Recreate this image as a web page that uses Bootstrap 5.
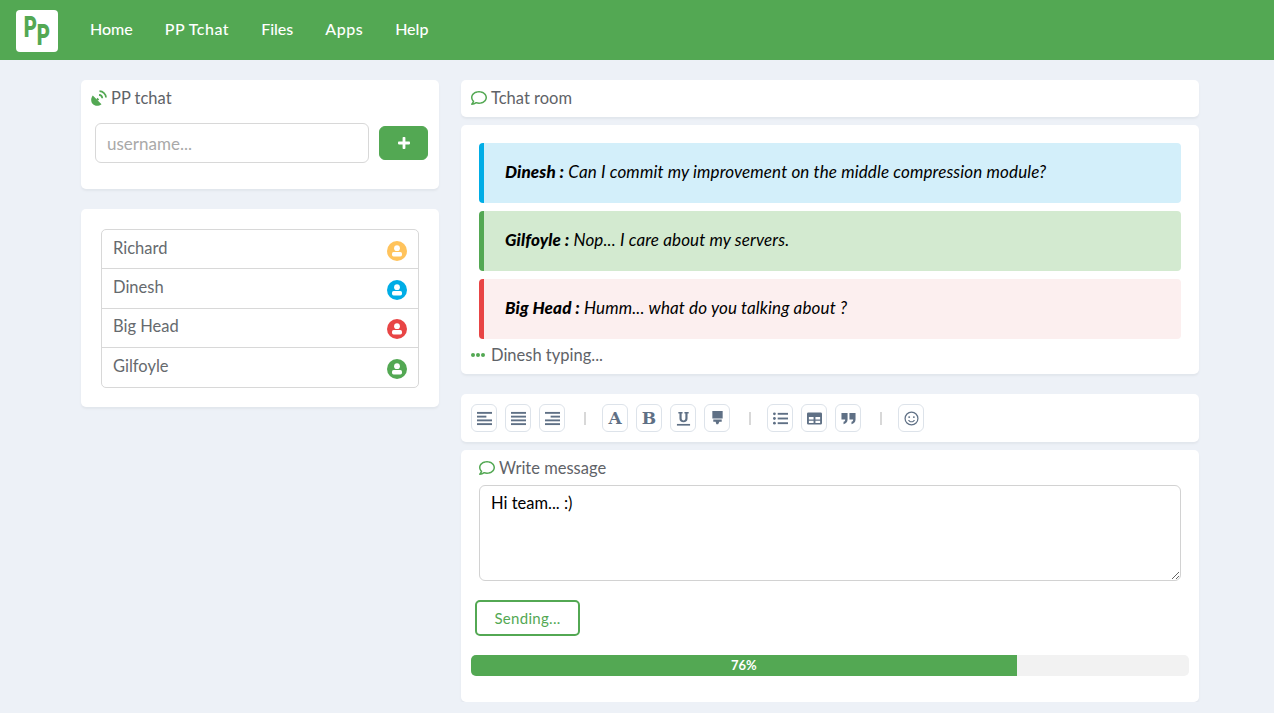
<!DOCTYPE html>
<html lang="en">
<head>
  <meta charset="UTF-8">
  <title>PP Tchat</title>
  <link href="https://cdn.jsdelivr.net/npm/bootstrap@5.3.0/dist/css/bootstrap.min.css" rel="stylesheet">
  <style>
    body { background: #edf1f7; font-family: "Lato", "Noto Sans", sans-serif; font-size: 16.5px; color: #5f6368; }
    .pp-nav { height: 60px; background: #53a853; padding: 0 16px; }
    .pp-logo { width: 42px; height: 42px; margin: 2px 16px 0 0; background: #fff; border-radius: 4px; color: #53a853; font-weight: 900; font-size: 29px; line-height: 1; font-family: "Roboto", sans-serif; }
    .pp-logo span { display: inline-block; transform: scaleX(.7); }
    .pp-logo span:first-child { margin: -7px -3px 0 0; }
    .pp-logo span:last-child { margin: 9px 0 0 -2.4px; }
    .pp-nav .nav-link { color: #fff; font-size: 16px; font-weight: 500; padding: 0 16px 2px; }
    .pp-nav .pp-wide { letter-spacing: .5px; }
    .pp-page { padding: 20px 75px 0 81px; gap: 22px; }
    .pp-left { width: 358px; flex: none; }
    .pp-right { width: 738px; flex: none; }
    .pp-box { background: #fff; border: 0; border-radius: 5px; box-shadow: 0 2px 2px #e2e6ec; }
    .pp-title { font-size: 16.5px; line-height: 20px; color: #5f6368; }
    .pp-ico { fill: #53a853; width: 16px; height: 16px; flex: none; }
    .pp-user-input { height: 40px; width: 274px; flex: none; font-size: 17px; padding: 0 11px; border-color: #d8d8d8; }
    .pp-user-input::placeholder { color: #a9a9a9; }
    .pp-add { width: 49px; height: 34px; background: #53a853; border-color: #53a853; padding: 0; }
    .pp-users { border: 1px solid #d8d8d8; border-radius: 5px; }
    .pp-user { height: 39.25px; padding: 0 11px 2px; font-size: 16.5px; color: #666a6e; border-bottom: 1px solid #d8d8d8; }
    .pp-user:last-child { border-bottom: 0; }
    .pp-user svg { width: 20px; height: 20px; margin-top: 5px; }
    .pp-msg { height: 60px; padding: 0 0 2px 21px; margin-bottom: 8px; border-left: 5px solid; border-radius: 4px; color: #000; font-style: italic; font-size: 17px; letter-spacing: .13px; }
    .pp-msg b { font-weight: 900; }
    .pp-info { background: #d3effa; border-color: #00ade6; }
    .pp-ok { background: #d3ead0; border-color: #53a853; }
    .pp-bad { background: #fcefef; border-color: #e84545; }
    .pp-tool { width: 26px; height: 28px; border: 1px solid #dde3ea; border-radius: 6px; color: #5f7085; font-family: "DejaVu Serif", serif; font-weight: 700; font-size: 17px; line-height: 1; }
    .pp-tool svg { width: 15px; height: 15px; fill: #5f7085; }
    .pp-sep { width: 2px; height: 13px; background: #d8d8d8; margin: 0 8px 0 11px; }
    .pp-area { height: 96px; font-size: 16.5px; color: #000; padding: 5px 11px; border-color: #d2d2d2; margin-left: 18px; width: 702px; }
    .pp-send { width: 105px; height: 36px; margin: 19px 0 0 14px; padding: 0; border: 2px solid #53a853; border-radius: 5px; color: #53a853; background: #fff; font-size: 15px; letter-spacing: .3px; }
    .pp-bar { height: 21px; width: 718px; margin: 19px 0 0 10px; background: #f2f2f2; border-radius: 5px; }
    .pp-fill { background: #53a853; font-size: 13px; font-weight: 700; }
    .pp-dot { width: 4px; height: 4px; border-radius: 50%; background: #53a853; }
    .pp-dots { gap: 1px; margin-right: 6px; }
  </style>
</head>
<body>
  <nav class="pp-nav d-flex align-items-center">
    <a class="pp-logo d-flex justify-content-center align-items-center text-decoration-none" href="#"><span>P</span><span>P</span></a>
    <a class="nav-link" href="#">Home</a>
    <a class="nav-link pp-wide" href="#">PP Tchat</a>
    <a class="nav-link" href="#">Files</a>
    <a class="nav-link pp-wide" href="#">Apps</a>
    <a class="nav-link" href="#">Help</a>
  </nav>

  <svg class="d-none">
    <symbol id="i-comment" viewBox="0 0 512 512"><path d="M256 32C114.6 32 0 125.1 0 240c0 47.6 19.9 91.2 52.9 126.3C38 405.7 7 439.1 6.5 439.5c-6.6 7-8.4 17.2-4.6 26S14.4 480 24 480c61.5 0 110-25.7 139.1-46.3C192 442.8 223.2 448 256 448c141.4 0 256-93.1 256-208S397.4 32 256 32zm0 368c-26.7 0-53.1-4.1-78.4-12.1l-22.7-7.2-19.5 13.8c-14.3 10.1-33.9 21.4-57.5 29 7.3-12.1 14.4-25.7 19.9-40.2l10.6-28.1-20.6-21.8C69.7 314.1 48 282.2 48 240c0-88.2 93.3-160 208-160s208 71.8 208 160-93.3 160-208 160z"/></symbol>
    <symbol id="i-user" viewBox="0 0 20 20"><circle cx="10" cy="10" r="10"/><circle cx="10" cy="7.2" r="2.9" fill="#fff"/><rect x="5" y="11" width="10" height="4.4" rx="1.6" fill="#fff"/></symbol>
  </svg>

  <div class="pp-page d-flex align-items-start">
    <div class="pp-left d-flex flex-column">
      <div class="pp-box" style="height:109px">
        <div class="pp-title d-flex align-items-center gap-1" style="padding:8px 0 0 10px">
          <svg class="pp-ico" viewBox="0 0 16 16"><path d="M1.800 5.500 10.500 14.200C7.500 16.500 3.800 16.200 1.800 14 -.3 11.800-.4 8.300 1.800 5.500z"/><path d="M6.500 7.800 8.200 9.500 6.800 10.800 5.200 9.200z"/><path d="M8 4.800A3.500 3.500 0 0 1 11.300 8.200" fill="none" stroke="#53a853" stroke-width="1.700"/><path d="M8.500 1.200A6.500 6.500 0 0 1 15 7.500" fill="none" stroke="#53a853" stroke-width="1.700"/></svg>
          <span>PP tchat</span>
        </div>
        <div class="d-flex align-items-center" style="padding:15px 0 0 14px">
          <input class="form-control pp-user-input" placeholder="username...">
          <button class="btn pp-add d-flex align-items-center justify-content-center" style="margin-left:10px">
            <svg width="12" height="12" viewBox="0 0 12 12" fill="#fff"><rect x="4.600" width="2.800" height="12" rx=".8"/><rect y="4.600" width="12" height="2.800" rx=".8"/></svg>
          </button>
        </div>
      </div>
      <div class="pp-box" style="margin-top:20px;padding:20px 20px 19px">
        <div class="pp-users">
          <div class="pp-user d-flex justify-content-between align-items-center"><span>Richard</span><svg fill="#ffc35c"><use href="#i-user"/></svg></div>
          <div class="pp-user d-flex justify-content-between align-items-center"><span>Dinesh</span><svg fill="#00ade6"><use href="#i-user"/></svg></div>
          <div class="pp-user d-flex justify-content-between align-items-center"><span>Big Head</span><svg fill="#e84545"><use href="#i-user"/></svg></div>
          <div class="pp-user d-flex justify-content-between align-items-center"><span>Gilfoyle</span><svg fill="#53a853"><use href="#i-user"/></svg></div>
        </div>
      </div>
    </div>

    <div class="pp-right d-flex flex-column">
      <div class="pp-box d-flex align-items-center gap-1" style="height:37px;padding:0 0 2px 10px">
        <svg class="pp-ico"><use href="#i-comment"/></svg><span class="pp-title">Tchat room</span>
      </div>
      <div class="pp-box" style="height:249px;margin-top:8px;padding:18px 18px 0">
        <div class="pp-msg pp-info d-flex align-items-center"><span><b>Dinesh :</b> Can I commit my improvement on the middle compression module?</span></div>
        <div class="pp-msg pp-ok d-flex align-items-center"><span><b>Gilfoyle :</b> Nop... I care about my servers.</span></div>
        <div class="pp-msg pp-bad d-flex align-items-center mb-0"><span><b>Big Head :</b> Humm... what do you talking about ?</span></div>
        <div class="d-flex align-items-center pp-title" style="margin:6px 0 0 -8px">
          <span class="d-flex pp-dots"><i class="pp-dot"></i><i class="pp-dot"></i><i class="pp-dot"></i></span>
          <span>Dinesh typing...</span>
        </div>
      </div>
      <div class="pp-box d-flex align-items-center" style="height:48px;margin-top:20px;padding-left:10px;gap:8px">
        <span class="pp-tool d-flex align-items-center justify-content-center"><svg viewBox="0 0 16 16"><rect y="1" width="16" height="2"/><rect y="5" width="10" height="2"/><rect y="9" width="16" height="2"/><rect y="13" width="16" height="2"/></svg></span>
        <span class="pp-tool d-flex align-items-center justify-content-center"><svg viewBox="0 0 16 16"><rect y="1" width="16" height="2"/><rect y="5" width="16" height="2"/><rect y="9" width="16" height="2"/><rect y="13" width="16" height="2"/></svg></span>
        <span class="pp-tool d-flex align-items-center justify-content-center"><svg viewBox="0 0 16 16"><rect y="1" width="16" height="2"/><rect x="6" y="5" width="10" height="2"/><rect y="9" width="16" height="2"/><rect y="13" width="16" height="2"/></svg></span>
        <span class="pp-sep"></span>
        <span class="pp-tool d-flex align-items-center justify-content-center">A</span>
        <span class="pp-tool d-flex align-items-center justify-content-center">B</span>
        <span class="pp-tool d-flex align-items-center justify-content-center"><svg viewBox="0 0 16 16"><path d="M2.500 1h4.500v1.600H6v5.200c0 1.500.8 2.200 2 2.200s2-.7 2-2.200V2.600H9V1h4.500v1.600h-1.200v5.300c0 2.700-1.700 4.100-4.300 4.100s-4.300-1.400-4.300-4.100V2.600H2.500z"/><rect x="1" y="13.800" width="14" height="1.800"/></svg></span>
        <span class="pp-tool d-flex align-items-center justify-content-center"><svg viewBox="0 0 16 16"><path d="M2.500 0h11v8h-11zM3.500 9h9v2.500H10L8.700 14 6.800 14 6 11.500H3.500z"/></svg></span>
        <span class="pp-sep"></span>
        <span class="pp-tool d-flex align-items-center justify-content-center"><svg viewBox="0 0 16 16"><circle cx="1.500" cy="3" r="1.500"/><circle cx="1.500" cy="8" r="1.500"/><circle cx="1.500" cy="13" r="1.500"/><rect x="5" y="2" width="11" height="2"/><rect x="5" y="7" width="11" height="2"/><rect x="5" y="12" width="11" height="2"/></svg></span>
        <span class="pp-tool d-flex align-items-center justify-content-center"><svg viewBox="0 0 16 16"><path d="M1.500 1.500h13A1.500 1.500 0 0 1 16 3v10a1.500 1.500 0 0 1-1.500 1.500h-13A1.500 1.500 0 0 1 0 13V3a1.500 1.500 0 0 1 1.500-1.500zM2 6.500v2.500h5V6.500zm7 0v2.500h5V6.500zM2 10.500V12.800h5v-2.300zm7 0V12.800h5v-2.300z"/></svg></span>
        <span class="pp-tool d-flex align-items-center justify-content-center"><svg viewBox="0 0 16 16"><path d="M.5 2h6.500v7c0 2.600-1.600 4.500-4.300 5V11.500C4 11.200 4.500 10.200 4.500 9H.5zM9 2h6.500v7c0 2.600-1.600 4.500-4.300 5V11.500C12.500 11.200 13 10.200 13 9H9z"/></svg></span>
        <span class="pp-sep"></span>
        <span class="pp-tool d-flex align-items-center justify-content-center"><svg viewBox="0 0 16 16"><path fill-rule="evenodd" d="M8 .5a7.500 7.500 0 1 1 0 15 7.500 7.500 0 0 1 0-15zM8 1.800a6.200 6.200 0 1 0 0 12.400A6.200 6.200 0 0 0 8 1.800z"/><circle cx="5.500" cy="6.500" r="1"/><circle cx="10.500" cy="6.500" r="1"/><path d="M4.300 9.500h1.300c.5 1 1.300 1.400 2.400 1.400s1.900-.4 2.400-1.400h1.300c-.6 1.700-2 2.600-3.700 2.600s-3.100-.9-3.700-2.600z"/></svg></span>
      </div>
      <div class="pp-box" style="height:252px;margin-top:8px">
        <div class="d-flex align-items-center gap-1" style="padding:8px 0 7px 18px">
          <svg class="pp-ico"><use href="#i-comment"/></svg><span class="pp-title">Write message</span>
        </div>
        <textarea class="form-control pp-area">Hi team... :)</textarea>
        <button class="btn pp-send d-block">Sending...</button>
        <div class="progress pp-bar">
          <div class="progress-bar pp-fill" style="width:76%">76%</div>
        </div>
      </div>
    </div>
  </div>

  <script src="https://cdn.jsdelivr.net/npm/bootstrap@5.3.0/dist/js/bootstrap.bundle.min.js"></script>
</body>
</html>
